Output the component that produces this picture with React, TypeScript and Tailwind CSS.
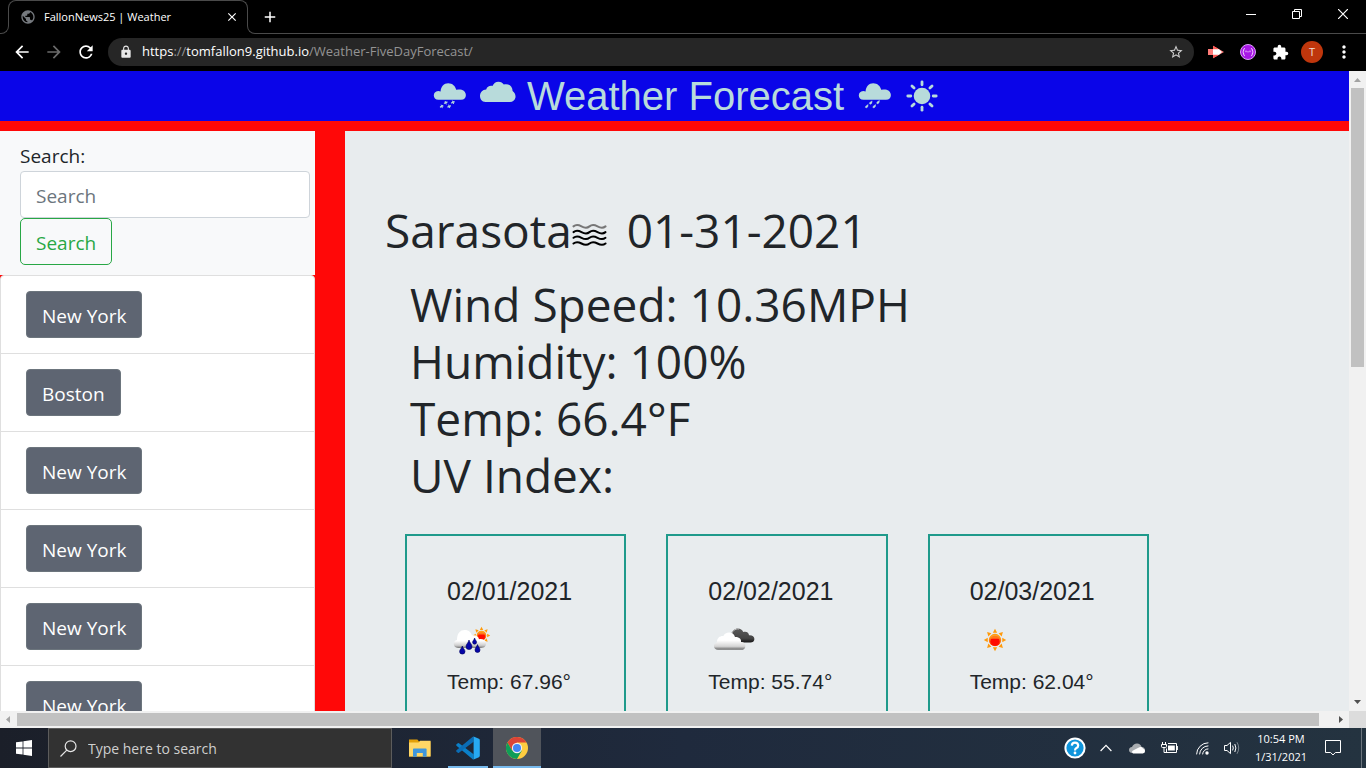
import type { ReactNode } from "react";
import {
  MdAdd,
  MdArrowBack,
  MdArrowForward,
  MdClose,
  MdExtension,
  MdLock,
  MdMoreVert,
  MdPublic,
  MdRefresh,
  MdStarBorder,
} from "react-icons/md";

const history = ["New York", "Boston", "New York", "New York", "New York", "New York"];

const forecast = [
  { date: "02/01/2021", temp: "67.96", icon: <ShowerIcon /> },
  { date: "02/02/2021", temp: "55.74", icon: <CloudsIcon /> },
  { date: "02/03/2021", temp: "62.04", icon: <ClearIcon /> },
];

const conditions = ["Wind Speed: 10.36MPH", "Humidity: 100%", "Temp: 66.4°F", "UV Index:"];

/* ---------- weather drawings ---------- */

function SunShape({ cx, cy, s }: { cx: number; cy: number; s: number }) {
  return (
    <g transform={`translate(${cx} ${cy}) scale(${s})`}>
      {[0, 45, 90, 135, 180, 225, 270, 315].map((a) => (
        <path key={a} d="M-2.2 -7.4 L0 -11.4 L2.2 -7.4 Z" fill="#ff9a0c" transform={`rotate(${a})`} />
      ))}
      <circle r="6.3" fill="#ff9a0c" />
      <circle r="5.8" cy="0.4" fill="url(#sunFill)" />
      <circle r="4.6" cy="1.2" fill="#ff0a00" />
      <path d="M-4.6 -1.2 A5 5 0 0 1 4.6 -1.2 Z" fill="#ff7a1a" />
      <defs>
        <linearGradient id="sunFill" x1="0" y1="0" x2="0" y2="1">
          <stop offset="0" stopColor="#ffb02e" />
          <stop offset="1" stopColor="#ff1a00" />
        </linearGradient>
      </defs>
    </g>
  );
}

function ShowerIcon() {
  return (
    <svg viewBox="0 0 50 50" className="size-[50px]" aria-label="Rain">
      <defs>
        <linearGradient id="rainCloud" x1="0" y1="0" x2="0" y2="1">
          <stop offset="0.6" stopColor="#ffffff" />
          <stop offset="0.85" stopColor="#cfcfcf" />
          <stop offset="1" stopColor="#777777" />
        </linearGradient>
      </defs>
      <SunShape cx={34.5} cy={20.5} s={0.76} />
      <path
        d="M11 33 C5.5 32.5 5.6 25.8 10 25 C10 18 13.5 14.8 18 15 C21.8 15 24.3 17.5 25 20.5 C29 19.8 31.5 21.8 32 24.2 C35 23.6 38.5 24.5 39 27.8 C39.4 31 37.5 33 34 33 Z"
        fill="url(#rainCloud)"
      />
      <g fill="#0505a8" stroke="#00005c" strokeWidth="0.6">
        <path d="M15.3 31 C16 33.5 18 34.6 18 36.4 A2.7 2.7 0 0 1 12.6 36.4 C12.6 34.6 14.6 33.5 15.3 31Z" />
        <path d="M22 25 C22.7 28 25 29.3 25 31.6 A3 3 0 0 1 19 31.6 C19 29.3 21.3 28 22 25Z" />
        <path d="M27.6 23 C28 25 29.6 25.8 29.6 27.2 A2 2 0 0 1 25.6 27.2 C25.6 25.8 27.2 25 27.6 23Z" />
        <path d="M30.5 29.6 C31.2 32 33 33 33 35 A2.5 2.5 0 0 1 28 35 C28 33 29.8 32 30.5 29.6Z" />
      </g>
    </svg>
  );
}

function CloudsIcon() {
  return (
    <svg viewBox="0 0 50 50" className="size-[50px]" aria-label="Broken clouds">
      <defs>
        <linearGradient id="frontCloud" x1="0" y1="0" x2="0" y2="1">
          <stop offset="0.45" stopColor="#ffffff" />
          <stop offset="0.8" stopColor="#d5d5d5" />
          <stop offset="1" stopColor="#666666" />
        </linearGradient>
        <linearGradient id="backCloud" x1="0" y1="0" x2="0" y2="1">
          <stop offset="0" stopColor="#5a5a5a" />
          <stop offset="0.7" stopColor="#444444" />
          <stop offset="1" stopColor="#161616" />
        </linearGradient>
      </defs>
      <path
        d="M26 27.5 C22 24 22.5 18 25.5 15.2 C29 12 34 13.5 35.2 17 C38.5 15.8 41 18 41 20.3 C44 20 46.4 21.4 46.4 24 C46.4 26.4 44.5 27.5 42.5 27.5 Z"
        fill="url(#backCloud)"
      />
      <path d="M23 21 C23.5 16.5 27 13.4 31 14" fill="none" stroke="#bdbdbd" strokeWidth="1" />
      <path
        d="M10 34.8 C5 34.8 4.6 28.6 9 27.3 C8.8 22.5 12.5 20.6 15.4 21 C17 16.6 25.5 16 27 22 C31.5 21.8 33.5 24.5 33 27 C36 27 37.6 29 37.4 31.2 C37.2 33.8 35.5 34.8 33.5 34.8 Z"
        fill="url(#frontCloud)"
      />
    </svg>
  );
}

function ClearIcon() {
  return (
    <svg viewBox="0 0 50 50" className="size-[50px]" aria-label="Clear sky">
      <SunShape cx={25} cy={25} s={0.98} />
    </svg>
  );
}

function MistIcon() {
  const wave = "q3.2 -2.6 8 0 t8 0 t8 0 t8 0";
  return (
    <svg viewBox="8 11 35 24" className="h-6 w-[35px]" aria-label="Mist">
      <g fill="none" stroke="#000" strokeWidth="2" strokeLinecap="round">
        <path d={`M9.5 14.4 ${wave}`} stroke="#777777" />
        <path d={`M9.5 20.1 ${wave}`} />
        <path d={`M9.5 25.8 ${wave}`} />
        <path d={`M9.5 31.5 ${wave}`} />
      </g>
    </svg>
  );
}

const smallCloud =
  "M5.4 19.8 C-0.7 19.8 -0.7 11.2 5.2 11 Q6.8 11 7.6 11.6 C7.8 6.6 11 3.2 15.2 3.2 C19.4 3.2 22.4 6 23.2 9.8 Q25 9.2 27.4 9.6 C34.6 10.6 34.6 19.8 28 19.8 Z";

const dropSpots = [
  [12.7, 22.7],
  [20, 22.3],
  [8.7, 26.4],
  [16.2, 26.4],
];

function SnowGlyph() {
  return (
    <svg viewBox="0 0 34 32" className="h-8 w-[34px]" fill="currentColor" aria-hidden="true">
      <path d={smallCloud} />
      <g stroke="currentColor" strokeWidth="1">
        {dropSpots.map(([x, y]) => (
          <path
            key={x}
            d={`M${x - 1.8} ${y + 0.4}L${x + 1.8} ${y - 0.4}M${x - 0.6} ${y - 1.7}L${x + 0.6} ${y + 1.7}M${x + 1.2} ${y - 1.3}L${x - 1.2} ${y + 1.3}`}
          />
        ))}
      </g>
    </svg>
  );
}

function CloudGlyph() {
  return (
    <svg viewBox="0 0 38 32" className="h-8 w-[38px]" fill="currentColor" aria-hidden="true">
      <path d="M6.6 22 C2.6 22 1 18.8 1 15.8 C1 12.4 3.4 9.6 7.2 9.4 C8 6.8 10.6 5.4 13.4 6 C14.8 3.2 16.8 1.7 19.4 1.7 C22 1.7 23.8 2.8 24.8 4.5 C29.6 3.2 33.6 6 33.6 11 C36 12.8 36.9 15.4 36.4 17.8 C35.8 20.4 33.8 22 31 22 Z" />
    </svg>
  );
}

function RainGlyph() {
  return (
    <svg viewBox="0 0 34 32" className="h-8 w-[34px]" fill="currentColor" aria-hidden="true">
      <path d={smallCloud} />
      {dropSpots.map(([x, y]) => (
        <path
          key={x}
          d={`M${x + 1.4} ${y - 1.8}Q${x + 1.4} ${y + 1.4} ${x - 0.6} ${y + 1.6}Q${x - 1.8} ${y + 1} ${x - 1} ${y - 0.2}Z`}
          stroke="currentColor"
          strokeWidth="0.5"
        />
      ))}
    </svg>
  );
}

function SunGlyph() {
  return (
    <svg viewBox="0 0 32 32" className="size-8" fill="currentColor" aria-hidden="true">
      <circle cx="16" cy="16" r="8.3" />
      {[0, 45, 90, 135, 180, 225, 270, 315].map((a) => (
        <path
          key={a}
          d="M16 4.8V1.8"
          stroke="currentColor"
          strokeWidth="2.8"
          strokeLinecap="round"
          transform={`rotate(${a} 16 16)`}
        />
      ))}
    </svg>
  );
}

/* ---------- browser frame ---------- */

function TabStrip() {
  return (
    <div className="flex h-[34px] shrink-0 bg-black text-white">
      <div className="mt-2 -mr-px w-[9px] rounded-br-lg border-r border-b border-[#4a4a4a]" />
      <div className="relative flex w-60 items-center pr-2 pl-3 text-[11px]">
        <div className="absolute inset-x-0 top-0 h-2 rounded-t-lg border-x border-t border-[#4a4a4a]" />
        <MdPublic className="size-4 text-[#75797e]" />
        <span className="ml-2 grow whitespace-nowrap">FallonNews25 | Weather</span>
        <button aria-label="Close tab" className="flex size-4 items-center justify-center">
          <MdClose className="size-3.5" />
        </button>
      </div>
      <div className="mt-2 -ml-px w-2 rounded-bl-lg border-b border-l border-[#4a4a4a]" />
      <div className="flex grow justify-between border-b border-[#4a4a4a]">
        <button aria-label="New tab" className="ml-1 flex size-[22px] items-center justify-center self-center">
          <MdAdd className="size-[18px]" />
        </button>
        <div className="flex h-7">
          <button aria-label="Minimize" className="flex w-[46px] items-center justify-center">
            <svg viewBox="0 0 10 10" className="size-2.5" stroke="currentColor">
              <path d="M0 5.5h10" />
            </svg>
          </button>
          <button aria-label="Restore" className="flex w-[46px] items-center justify-center">
            <svg viewBox="0 0 10 10" className="size-2.5" stroke="currentColor" fill="none">
              <path d="M0.5 2.5h7v7h-7zM2.5 2.5v-2h7v7h-2" />
            </svg>
          </button>
          <button aria-label="Close" className="flex w-[46px] items-center justify-center">
            <svg viewBox="0 0 10 10" className="size-2.5" stroke="currentColor" strokeWidth="1.2">
              <path d="M0 0L10 10M10 0L0 10" />
            </svg>
          </button>
        </div>
      </div>
    </div>
  );
}

function ToolButton({ label, children }: { label: string; children: ReactNode }) {
  return (
    <button aria-label={label} className="flex h-7 w-8 shrink-0 items-center justify-center">
      {children}
    </button>
  );
}

function Toolbar() {
  return (
    <div className="flex h-[37px] shrink-0 items-center bg-black px-1.5 pb-px text-white">
      <ToolButton label="Back">
        <MdArrowBack className="size-5" />
      </ToolButton>
      <ToolButton label="Forward">
        <MdArrowForward className="size-5 text-[#6b6b6b]" />
      </ToolButton>
      <ToolButton label="Reload">
        <MdRefresh className="size-5" />
      </ToolButton>
      <div className="mx-1.5 flex h-7 grow items-center rounded-full bg-[#262626] pr-2.5 pl-[11px]">
        <MdLock className="size-3.5 text-[#e8e8e8]" />
        <a
          href="https://tomfallon9.github.io/Weather-FiveDayForecast/"
          className="ml-[9px] grow text-[13px] text-[#949494]"
        >
          <span className="text-white">https</span>://<span className="text-white">tomfallon9.github.io</span>
          /Weather-FiveDayForecast/
        </a>
        <button aria-label="Bookmark this tab">
          <MdStarBorder className="size-4 text-[#cfcfcf]" />
        </button>
      </div>
      <ToolButton label="Send extension">
        <svg viewBox="0 0 16 16" className="size-4">
          <path d="M0 5h5V1.8L16 8 5 14.2V11H0z" fill="#ff7b78" />
          <path d="M5 1.8L10 4.6V11.4L5 14.2z" fill="#ff5c58" />
          <path d="M5 5.2h5.4V4.8L14 8l-3.6 3.2v-.4H5z" fill="#fff" />
        </svg>
      </ToolButton>
      <ToolButton label="JSON extension">
        <svg viewBox="0 0 16 16" className="size-4" fill="none">
          <circle cx="8" cy="8" r="7.5" fill="#a817e6" stroke="#d9a2f5" />
          <path
            d="M4.8 4.4C3 4.4 4.4 7.4 2.7 8c1.7.6.3 3.8 2.1 3.8M11.2 4.4c1.8 0 .4 3 2.1 3.6-1.7.6-.3 3.8-2.1 3.8"
            stroke="#f3d9ff"
          />
          <path d="M6 6.6v1.6M8 7.2v1.2M10 6.6v1.6" stroke="#f3d9ff" />
        </svg>
      </ToolButton>
      <ToolButton label="Extensions">
        <MdExtension className="size-[17px]" />
      </ToolButton>
      <ToolButton label="Profile">
        <span className="flex size-[22px] items-center justify-center rounded-full bg-[#bf360c] text-[11px] text-[#f0dcd5]">
          T
        </span>
      </ToolButton>
      <ToolButton label="Menu">
        <MdMoreVert className="size-5" />
      </ToolButton>
    </div>
  );
}

function Arrow({ className, d }: { className: string; d: string }) {
  return (
    <svg viewBox="0 0 17 17" className={`size-[17px] shrink-0 ${className}`} fill="currentColor" aria-hidden="true">
      <path d={d} />
    </svg>
  );
}

/* ---------- page ---------- */

function Sidebar() {
  return (
    <aside className="w-[315px] shrink-0 text-[19px] leading-[30px]">
      <form className="bg-[#f8f9fa] pt-2.5 pr-[5px] pb-2.5 pl-5" onSubmit={(e) => e.preventDefault()}>
        <label htmlFor="city" className="block">
          Search:
        </label>
        <input
          id="city"
          type="text"
          placeholder="Search"
          className="block h-[47px] w-full rounded border border-[#ced4da] bg-white px-[15px] pt-0.5 placeholder:text-[#6c757d]"
        />
        <button className="block h-[47px] rounded-[5px] border border-[#28a745] px-[15px] pt-0.5 text-[#28a745]">
          Search
        </button>
      </form>
      <ul className="rounded-t border border-[#dfdfdf] bg-white">
        {history.map((city, i) => (
          <li key={i} className="border-b border-[#dfdfdf] py-[15px] pl-[25px]">
            <button className="block h-[47px] rounded border border-[#6c757d] bg-[#5e6572] px-[15px] pt-0.5 font-medium text-white">
              {city}
            </button>
          </li>
        ))}
      </ul>
    </aside>
  );
}

function Forecast() {
  return (
    <main className="ml-[30px] grow bg-[#e8ecee] pt-[71px]">
      <h2 className="flex items-center pl-10 text-[46px] leading-[57px]">
        <span>Sarasota</span>
        <span className="mr-5 pt-2">
          <MistIcon />
        </span>
        <span>01-31-2021</span>
      </h2>
      <ul className="mt-[17px] pl-[65px] text-[46px] leading-[57px]">
        {conditions.map((line) => (
          <li key={line}>{line}</li>
        ))}
      </ul>
      <div className="mt-[30px] ml-[60px] grid max-w-[744px] grid-cols-3 gap-10 font-['Liberation_Sans',Arial,sans-serif]">
        {forecast.map((day) => (
          <section key={day.date} className="h-80 border-2 border-[#1f9a8b] p-10">
            <h3 className="text-[25px] leading-[30px]">{day.date}</h3>
            <div className="mt-[9px] mb-1">{day.icon}</div>
            <p className="text-[21px] leading-[26px] whitespace-nowrap">Temp: {day.temp}°</p>
          </section>
        ))}
      </div>
    </main>
  );
}

function Viewport() {
  return (
    <div className="flex min-h-0 grow flex-col">
      <div className="flex min-h-0 grow">
        <div className="grow overflow-hidden bg-[#ff0808] text-[#212529]">
          <header className="flex h-[50px] items-center justify-center bg-[#0a05e8] pl-[22px] font-['Liberation_Sans',Arial,sans-serif] text-[#b8dbdb]">
            <SnowGlyph />
            <span className="mr-2.5 ml-3">
              <CloudGlyph />
            </span>
            <h1 className="text-[40px] leading-[50px] whitespace-nowrap">Weather Forecast</h1>
            <span className="mr-3.5 ml-3.5">
              <RainGlyph />
            </span>
            <SunGlyph />
          </header>
          <div className="flex items-start pt-2.5">
            <Sidebar />
            <Forecast />
          </div>
        </div>
        <div className="flex w-[17px] shrink-0 flex-col items-center bg-[#f1f1f1]">
          <Arrow className="text-[#a3a3a3]" d="M5 11L8.5 7L12 11Z" />
          <div className="w-full grow px-0.5">
            <div className="h-[46%] bg-[#c1c1c1]" />
          </div>
          <Arrow className="text-[#505050]" d="M5 6L8.5 10L12 6Z" />
        </div>
      </div>
      <div className="flex h-[17px] shrink-0 bg-[#f1f1f1]">
        <Arrow className="text-[#a3a3a3]" d="M10 5L6 8.5L10 12Z" />
        <div className="grow py-0.5">
          <div className="h-full w-[99%] bg-[#c1c1c1]" />
        </div>
        <Arrow className="text-[#505050]" d="M7 5L11 8.5L7 12Z" />
        <div className="w-[17px] shrink-0 bg-[#dcdcdc]" />
      </div>
    </div>
  );
}

/* ---------- taskbar ---------- */

function TrayButton({ label, className, children }: { label: string; className: string; children: ReactNode }) {
  return (
    <button aria-label={label} className={`flex h-full shrink-0 items-center justify-center ${className}`}>
      {children}
    </button>
  );
}

function Taskbar() {
  return (
    <footer className="flex h-10 shrink-0 bg-linear-to-r from-[#1b1f29] via-[#1f2a3d] to-[#243340] text-white">
      <TrayButton label="Start" className="w-12">
        <svg viewBox="0 0 16 16" className="size-4" fill="currentColor">
          <path d="M0 2.3L6.6 1.4V7.6H0zM7.4 1.3L16 0V7.6H7.4zM0 8.4H6.6V14.6L0 13.7zM7.4 8.4H16V16L7.4 14.8z" />
        </svg>
      </TrayButton>
      <label className="flex w-[344px] items-center border border-[#5c5c5c] bg-[#323232] pl-[11px]">
        <svg viewBox="0 0 17 17" className="size-[17px] shrink-0" fill="none" stroke="#e6e6e6" strokeWidth="1.2">
          <circle cx="10.6" cy="6.2" r="5.4" />
          <path d="M6.8 10.2L0.5 16.5" />
        </svg>
        <input
          type="text"
          aria-label="Type here to search"
          placeholder="Type here to search"
          className="ml-[11px] w-full bg-transparent text-[14px] placeholder:text-[#cfcfcf]"
        />
      </label>
      <TrayButton label="File Explorer" className="ml-1 w-12">
        <svg viewBox="0 0 22 20" className="h-5 w-[22px]">
          <path d="M0 1.4h8.4l1.6 2H21.4V18.4H0z" fill="#e3a008" />
          <path d="M0 4.4h9.6l1.6-1.6h10.4V18.4H0z" fill="#ffd766" />
          <path d="M4 18.8V11.2q0-.8.8-.8H16.8q.8 0 .8.8V18.8H13.8V15H7.8v3.8z" fill="#3e96dc" />
        </svg>
      </TrayButton>
      <TrayButton label="Visual Studio Code" className="relative w-12">
        <svg viewBox="0 0 24 24" className="size-6">
          <path d="M0.3 8.6L1.8 7.2Q2.4 6.8 3 7.2L17.6 18.2V23.6Q16.9 23.6 16.4 23.1L0.5 9.8Q-.1 9.2 .3 8.6z" fill="#0b80c9" />
          <path d="M0.3 15.4L1.8 16.8Q2.4 17.2 3 16.8L17.6 5.8V0.4Q16.9 .4 16.4 .9L.5 14.2Q-.1 14.8 .3 15.4z" fill="#0a6cb5" />
          <path d="M17.6 0.4L22.9 2.8Q23.8 3.2 23.8 4.2V19.8Q23.8 20.8 22.9 21.2L17.6 23.6z" fill="#27a9f2" />
        </svg>
        <span className="absolute inset-x-1 bottom-0 h-0.5 bg-[#76b9ed]" />
      </TrayButton>
      <TrayButton label="Google Chrome" className="relative ml-px w-12 bg-[#50545b]">
        <svg viewBox="0 0 24 24" className="size-[22px]">
          <circle cx="12" cy="12" r="12" fill="#ffcd40" />
          <path d="M12 12L6.8 15L1.6 6A12 12 0 0 1 22.4 6H12z" fill="#db4437" />
          <path d="M1.6 6A12 12 0 0 0 12 24L17.2 15L12 12L6.8 15z" fill="#0f9d58" />
          <circle cx="12" cy="12" r="5.6" fill="#f1f1f1" />
          <circle cx="12" cy="12" r="4.4" fill="#4285f4" />
        </svg>
        <span className="absolute inset-x-0 bottom-0 h-0.5 bg-[#76b9ed]" />
      </TrayButton>
      <div className="ml-auto flex items-center">
        <TrayButton label="Get help" className="w-[31px]">
          <svg viewBox="0 0 22 22" className="size-[22px]" fill="none">
            <circle cx="11" cy="11" r="9.6" fill="#0f95dc" stroke="#fff" strokeWidth="2" />
            <path d="M7.8 8.6Q8 5.6 11 5.6T14.2 8.4Q14.2 10 12.4 11Q11 11.8 11 13.4" stroke="#fff" strokeWidth="2.2" />
            <circle cx="11" cy="16" r="1.4" fill="#fff" />
          </svg>
        </TrayButton>
        <TrayButton label="Show hidden icons" className="w-[31px]">
          <svg viewBox="0 0 12 8" className="h-2 w-3" fill="none" stroke="currentColor" strokeWidth="1.2">
            <path d="M0.6 7L6 1.4 11.4 7" />
          </svg>
        </TrayButton>
        <TrayButton label="OneDrive" className="w-8">
          <svg viewBox="0 0 16 11" className="h-[11px] w-4">
            <path d="M3.2 10Q0 9.6 0 7T3 4Q4.4.4 8 .4T12.6 4Q15.6 4 16 7T13 10z" fill="#a9adb1" />
            <path d="M4 10.6Q1.6 8.4 5 7L10.4 4.2Q12.6 3.4 14 5.4Q16 6 16 8T13.8 10.6z" fill="#fff" />
          </svg>
        </TrayButton>
        <TrayButton label="Battery" className="w-[33px]">
          <svg viewBox="0 0 17 12" className="h-3 w-[17px]" fill="none" stroke="currentColor">
            <path d="M1.5 0v2M4.5 0v2M0.5 2.5h5v2q0 1-1 1h-3q-1 0-1-1zM3 5.5v5h3M7 1.5h8.5v9H5.5v-4" />
            <path d="M7 3.5h6.8v5H7z" fill="currentColor" stroke="none" />
            <path d="M16.4 4v4" />
          </svg>
        </TrayButton>
        <TrayButton label="Network" className="w-8">
          <svg viewBox="0 0 13 13" className="size-[13px]" fill="none" stroke="currentColor">
            <path d="M.6 12.4A11.8 11.8 0 0 1 12.4 .8M3.6 12.4A8.8 8.8 0 0 1 12.4 3.9M6.6 12.4A5.8 5.8 0 0 1 12.4 6.9" />
            <circle cx="11" cy="11" r="1.7" fill="currentColor" stroke="none" />
          </svg>
        </TrayButton>
        <TrayButton label="Volume" className="w-7">
          <svg viewBox="0 0 16 14" className="h-3.5 w-4" fill="none" stroke="currentColor">
            <path d="M.5 4.5H3L6.5 1.4V12.6L3 9.5H.5z" />
            <path d="M8.6 4.6Q10 7 8.6 9.4M10.8 3Q13 7 10.8 11" />
            <path d="M13 1.2Q16.4 7 13 12.8" stroke="#7d8790" />
          </svg>
        </TrayButton>
        <button className="flex w-[70px] flex-col items-center text-[11px] leading-[18px] whitespace-nowrap">
          <span>10:54 PM</span>
          <span>1/31/2021</span>
        </button>
        <TrayButton label="Notifications" className="w-[34px]">
          <svg viewBox="0 0 16 16" className="size-4" fill="none" stroke="currentColor">
            <path d="M.5 .5h15v12H10.4L8 15 5.6 12.5H.5z" />
          </svg>
        </TrayButton>
      </div>
      <div className="ml-[11px] w-[5px] border-l border-[#6b747d]" />
    </footer>
  );
}

export default function App() {
  return (
    <div className="flex h-screen flex-col overflow-hidden font-['Open_Sans','Noto_Sans',sans-serif]">
      <TabStrip />
      <Toolbar />
      <Viewport />
      <Taskbar />
    </div>
  );
}
